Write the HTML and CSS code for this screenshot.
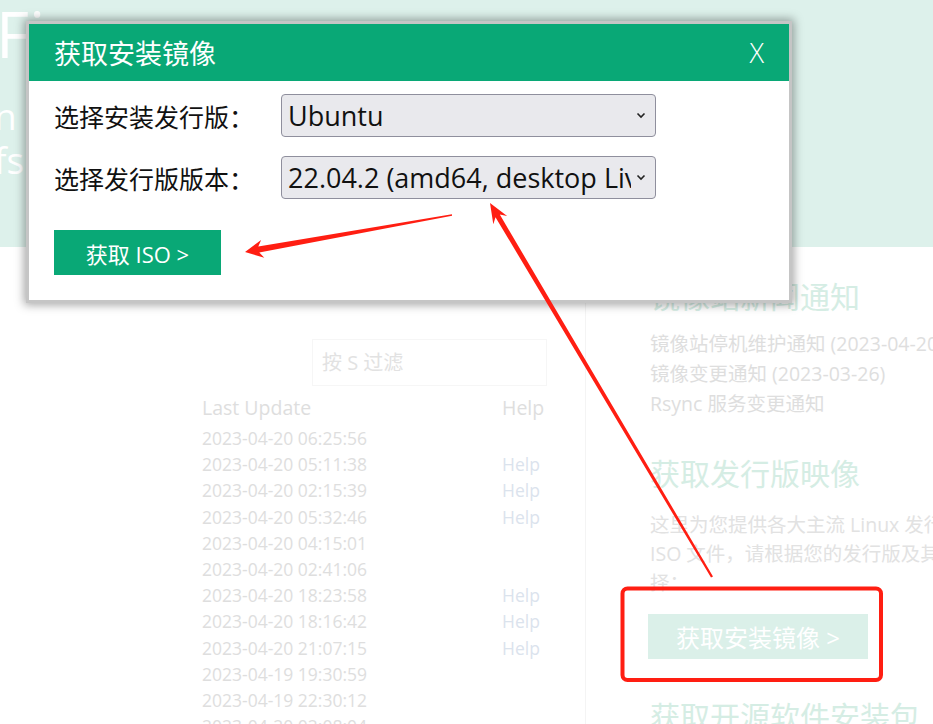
FILE: index.html
```html
<!DOCTYPE html>
<html lang="zh-CN">
<head>
<meta charset="utf-8">
<title>获取安装镜像</title>
<link rel="stylesheet" href="styles.css">
</head>
<body>
<div class="page">
  <header class="banner">
    <div class="banner-title">Fi</div>
    <div class="banner-line">n s</div>
    <div class="banner-line">fs</div>
  </header>
  <main class="main">
    <section class="mirrors">
      <input class="filter" type="text" placeholder="按 S 过滤">
      <div class="table">
        <div class="th">Last Update</div><div class="th">Help</div>
        <div class="td">2023-04-20 06:25:56</div><div class="td help"></div>
        <div class="td">2023-04-20 05:11:38</div><div class="td help">Help</div>
        <div class="td">2023-04-20 02:15:39</div><div class="td help">Help</div>
        <div class="td">2023-04-20 05:32:46</div><div class="td help">Help</div>
        <div class="td">2023-04-20 04:15:01</div><div class="td help"></div>
        <div class="td">2023-04-20 02:41:06</div><div class="td help"></div>
        <div class="td">2023-04-20 18:23:58</div><div class="td help">Help</div>
        <div class="td">2023-04-20 18:16:42</div><div class="td help">Help</div>
        <div class="td">2023-04-20 21:07:15</div><div class="td help">Help</div>
        <div class="td">2023-04-19 19:30:59</div><div class="td help"></div>
        <div class="td">2023-04-19 22:30:12</div><div class="td help"></div>
        <div class="td">2023-04-20 02:08:04</div><div class="td help"></div>
      </div>
    </section>
    <aside class="side">
      <h2 class="side-title first">镜像站新闻通知</h2>
      <ul class="news">
        <li>镜像站停机维护通知 (2023-04-20)</li>
        <li>镜像变更通知 (2023-03-26)</li>
        <li>Rsync 服务变更通知</li>
      </ul>
      <h2 class="side-title second">获取发行版映像</h2>
      <p class="side-text">这里为您提供各大主流 Linux 发行版的下载 ISO 文件，请根据您的发行版及其版本选择：</p>
      <button class="side-btn" type="button">获取安装镜像 &gt;</button>
      <h2 class="side-title third">获取开源软件安装包</h2>
    </aside>
  </main>
</div>

<div class="modal">
  <div class="modal-head">
    <span class="modal-title">获取安装镜像</span>
    <span class="modal-close">X</span>
  </div>
  <div class="modal-body">
    <div class="form-row">
      <label class="form-label">选择安装发行版：</label>
      <div class="select-wrap">
        <select class="select"><option>Ubuntu</option></select>
        <svg class="chev" width="10" height="7" viewBox="0 0 10 7"><path d="M1.5 1.5 L5 5 L8.5 1.5" fill="none" stroke="#222" stroke-width="1.6"/></svg>
      </div>
    </div>
    <div class="form-row">
      <label class="form-label">选择发行版版本：</label>
      <div class="select-wrap">
        <select class="select"><option>22.04.2 (amd64, desktop LiveDVD)</option></select>
        <svg class="chev" width="10" height="7" viewBox="0 0 10 7"><path d="M1.5 1.5 L5 5 L8.5 1.5" fill="none" stroke="#222" stroke-width="1.6"/></svg>
      </div>
    </div>
    <button class="iso-btn" type="button">获取 ISO &gt;</button>
  </div>
</div>

<svg class="annot" width="933" height="724" viewBox="0 0 933 724">
  <polygon fill="#ff1e12" points="245,252 264.3,257.7 259.3,252.5 452.1,215.8 451.9,214.2 258.3,246.5 261.1,239.9"/>
  <polygon fill="#ff1e12" points="490,203 507.1,216.1 499.8,214.6 713,576.4 711,577.6 495.5,217.2 493.3,224.3"/>
  <rect x="622.5" y="588.5" width="258.5" height="91.5" rx="5" ry="5" fill="none" stroke="#ff1e12" stroke-width="4"/>
</svg>
</body>
</html>
```
FILE: styles.css
```css
html, body {
  margin: 0;
  padding: 0;
  overflow: hidden;
  width: 933px;
  height: 724px;
}
body {
  font-family: "Open Sans", "Noto Sans CJK SC", sans-serif;
  background: #ffffff;
  position: relative;
}
.page {
  width: 1200px;
}
.banner {
  height: 247px;
  background: #ddf1eb;
  color: #ffffff;
  box-sizing: border-box;
  padding-top: 2px;
  overflow: hidden;
}
.banner-title {
  font-size: 64px;
  line-height: 64px;
  margin-left: -4px;
}
.banner-line {
  font-size: 37px;
  line-height: 44px;
  margin-left: -6px;
}
.banner-line:nth-child(2) {
  margin-top: 28px;
}
.main {
  display: flex;
  align-items: flex-start;
}
.mirrors {
  width: 345px;
  margin-left: 202px;
  padding-right: 38px;
  padding-top: 92px;
  display: flex;
  flex-direction: column;
}
.filter {
  align-self: flex-end;
  width: 235px;
  height: 47px;
  box-sizing: border-box;
  border: 1px solid #f6f6f6;
  padding: 0 0 0 9px;
  margin: 0;
  font-family: "Open Sans", "Noto Sans CJK SC", sans-serif;
  font-size: 20px;
  background: #fff;
  outline: none;
}
.filter::placeholder {
  color: #e2e2e2;
}
.table {
  display: grid;
  grid-template-columns: 300px 45px;
  margin-top: 7px;
}
.th {
  font-size: 19.5px;
  line-height: 30px;
  color: #dedede;
  margin-bottom: 2px;
}
.td {
  font-size: 17.5px;
  line-height: 26.2px;
  color: #dedede;
  white-space: nowrap;
}
.td.help {
  color: #dbe3ed;
}
.side {
  flex-shrink: 0;
  width: 382px;
  border-left: 1px solid #f4f4f4;
  padding-left: 64px;
  min-height: 480px;
}
.side-title {
  margin: 0;
  font-family: "Noto Sans CJK SC", sans-serif;
  font-weight: normal;
  font-size: 30px;
  line-height: 40px;
  color: #d5ede4;
  white-space: nowrap;
}
.side-title.first {
  margin-top: 28px;
}
.side-title.second {
  margin-top: 33px;
}
.side-title.third {
  margin-top: 36px;
}
.news {
  list-style: none;
  margin: 14px 0 0;
  padding: 0;
}
.news li {
  font-size: 19.5px;
  line-height: 30px;
  color: #dedede;
  white-space: nowrap;
}
.side-text {
  margin: 18px 0 0;
  font-size: 19.5px;
  line-height: 29px;
  color: #e2e2e2;
}
.side-btn {
  display: block;
  margin-top: 17px;
  margin-left: -2px;
  width: 220px;
  height: 45px;
  border: none;
  background: #dbf0e9;
  color: #ffffff;
  font-family: "Open Sans", "Noto Sans CJK SC", sans-serif;
  font-size: 24px;
  padding: 0;
}

/* modal */
.modal {
  position: absolute;
  left: 26px;
  top: 21px;
  width: 760px;
  border: 3px solid #c5c5c5;
  background: #ffffff;
  box-shadow: 0 0 9px 2px rgba(0, 0, 0, 0.35);
}
.modal-head {
  height: 57px;
  background: #09a876;
  color: #ffffff;
  display: flex;
  align-items: center;
  justify-content: space-between;
  padding: 0 25px;
}
.modal-title {
  font-family: "Noto Sans CJK SC", sans-serif;
  font-size: 27px;
}
.modal-close {
  font-size: 27px;
  font-weight: 300;
}
.modal-body {
  padding: 13px 25px 25px;
  display: flex;
  flex-direction: column;
  gap: 19px;
}
.form-row {
  display: flex;
  align-items: center;
  height: 43px;
}
.form-label {
  width: 227px;
  flex-shrink: 0;
  font-family: "Noto Sans CJK SC", sans-serif;
  font-size: 25px;
  color: #111111;
}
.select-wrap {
  position: relative;
  width: 375px;
  height: 43px;
}
.select {
  -webkit-appearance: none;
  appearance: none;
  width: 375px;
  height: 43px;
  box-sizing: border-box;
  border: 1px solid #8f8f9d;
  border-radius: 4px;
  background: #e9e9ed;
  color: #111111;
  font-family: "Open Sans", "Noto Sans CJK SC", sans-serif;
  font-size: 27px;
  padding: 0 24px 0 6px;
  margin: 0;
}
.chev {
  position: absolute;
  right: 10px;
  top: 18px;
}
.iso-btn {
  margin-top: 12px;
  width: 167px;
  height: 45px;
  border: none;
  background: #09a876;
  color: #ffffff;
  font-family: "Open Sans", "Noto Sans CJK SC", sans-serif;
  font-size: 22px;
  padding: 0;
}

.annot {
  position: absolute;
  left: 0;
  top: 0;
  pointer-events: none;
}
```
